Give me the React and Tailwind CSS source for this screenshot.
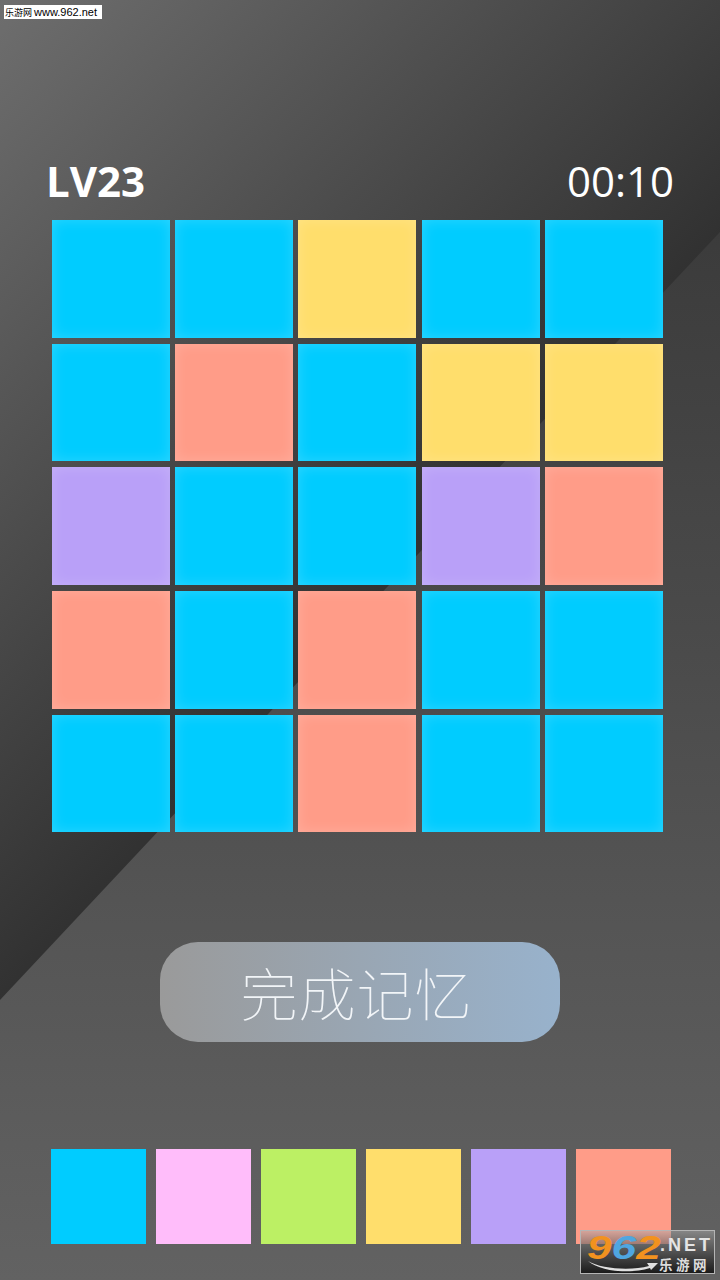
import React from "react";

const c = { b: "bg-[#00ccff]", y: "bg-[#ffde6c]", r: "bg-[#ff9c88]", p: "bg-[#b9a0f8]" };

const rows = [
  ["b", "b", "y", "b", "b"],
  ["b", "r", "b", "y", "y"],
  ["p", "b", "b", "p", "r"],
  ["r", "b", "r", "b", "b"],
  ["b", "b", "r", "b", "b"],
];

const palette = ["bg-[#00ccff]", "bg-[#ffbdfa]", "bg-[#bcf064]", "bg-[#ffde6c]", "bg-[#b9a0f8]", "bg-[#ff9c88]"];

const SiteLogo = () => (
  <div className="absolute left-[580px] top-[1230px] w-[135px] h-[44px] border border-[#b5b5b5] bg-[linear-gradient(180deg,rgba(170,170,170,0.5),rgba(20,20,20,0.9))]">
    <span className="absolute left-[6px] top-[-1px] origin-left scale-x-[1.3] text-[#f2921f] italic font-bold text-[34px] leading-[34px] font-['Liberation_Sans',sans-serif]">
      9<span className="text-[#4fa6e0]">6</span>2
    </span>
    <span className="absolute left-[79px] top-[3px] text-[#e4e4e4] font-bold text-[18px] leading-[22px] tracking-[3px] font-['Liberation_Sans',sans-serif]">.NET</span>
    <span className="absolute left-[78px] top-[25px] text-[#dddddd] font-bold text-[13.5px] leading-[16px] tracking-[3.5px] font-['Noto_Sans_CJK_SC',sans-serif]">乐游网</span>
    <svg className="absolute left-[6px] top-[29px]" width="72" height="13" viewBox="0 0 72 13">
      <path d="M1 1C14 9 44 11 62 6L60 3L71 3L64 10L63 8C44 14 14 12 1 1Z" fill="#e0e0e0" />
    </svg>
  </div>
);

const App = () => {
  return (
    <div className="relative w-[720px] h-[1280px] overflow-hidden bg-[linear-gradient(180deg,#3a3a3a_15%,#626262_100%)] font-['Open_Sans',sans-serif]">
      <div className="absolute inset-0 bg-[linear-gradient(133deg,#6e6e6e_0%,#303030_50%)] [clip-path:polygon(0_0,720px_0,720px_232px,0_1000px)]" />

      <div className="absolute left-[4px] top-[5px] w-[98px] h-[14px] bg-white text-black text-[9px] leading-[14px] pl-[1px] whitespace-nowrap font-['Noto_Sans_CJK_SC',sans-serif]">
        乐游网 <span className="text-[11px] font-['Liberation_Sans',sans-serif]">www.962.net</span>
      </div>

      <div className="relative flex flex-col pt-[150px]">
        <div className="flex justify-between items-center pl-[46px] pr-[46px] h-[60px] text-white text-[42px]">
          <span className="font-bold">LV23</span>
          <span>00:10</span>
        </div>

        <div className="grid grid-cols-5 gap-x-[5.25px] gap-y-[6.2px] w-[611px] ml-[51.8px] mt-[10px]">
          {rows.flat().map((k, i) => (
            <div key={i} className={`h-[117.5px] ${c[k]} shadow-[inset_0_0_14px_rgba(255,255,255,0.18)]`} />
          ))}
        </div>

        <button className="self-center mt-[109.7px] w-[400px] h-[100px] pr-[7px] rounded-[38px] bg-[linear-gradient(90deg,#9a9a9a,#98b2cc)] text-[#f2f5f8] text-[57px] tracking-[1px] font-thin font-['Noto_Sans_CJK_SC',sans-serif]">
          完成记忆
        </button>

        <div className="flex gap-[10px] ml-[51px] mt-[107px]">
          {palette.map((p) => (
            <div key={p} className={`w-[95px] h-[95px] ${p}`} />
          ))}
        </div>
      </div>

      <SiteLogo />
    </div>
  );
};

export default App;
